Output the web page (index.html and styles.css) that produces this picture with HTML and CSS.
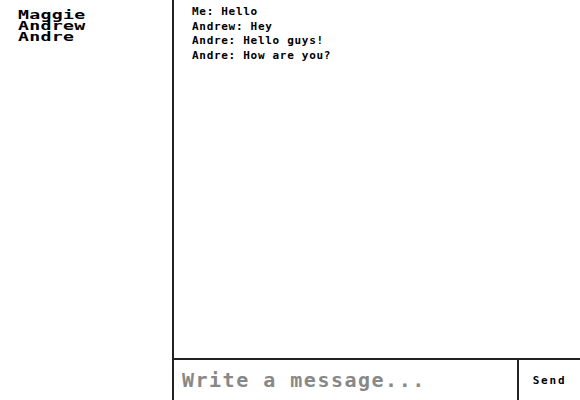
FILE: index.html
```html
<!DOCTYPE html>
<html>
<head>
<meta charset="utf-8">
<link rel="stylesheet" href="styles.css">
</head>
<body>
<div class="app">
  <aside class="users">
    <div class="user"><span class="name">Maggie</span></div>
    <div class="user"><span class="name">Andrew</span></div>
    <div class="user"><span class="name">Andre</span></div>
  </aside>
  <main class="chat">
    <div class="messages">
      <div class="msg">Me: Hello</div>
      <div class="msg">Andrew: Hey</div>
      <div class="msg">Andre: Hello guys!</div>
      <div class="msg">Andre: How are you?</div>
    </div>
    <form class="composer">
      <input class="input" type="text" placeholder="Write a message...">
      <button class="send" type="button">Send</button>
    </form>
  </main>
</div>
</body>
</html>
```
FILE: styles.css
```css
html, body {
  margin: 0;
  padding: 0;
  height: 100%;
  background: #fff;
}
.app {
  display: flex;
  height: 400px;
  width: 580px;
  font-family: "DejaVu Sans Mono", "Liberation Mono", monospace;
  color: #000;
}
.users {
  flex: none;
  width: 174px;
  border-right: 2px solid #222;
  padding: 8px 0 0 18px;
  box-sizing: border-box;
}
.user {
  height: 11px;
  line-height: 11px;
}
.name {
  display: inline-block;
  font-size: 13px;
  font-weight: bold;
  line-height: 11px;
  letter-spacing: 0.2px;
  transform: scaleX(1.4);
  transform-origin: left center;
}
.chat {
  flex: 1;
  display: flex;
  flex-direction: column;
  min-width: 0;
}
.messages {
  flex: 1;
  padding: 5px 0 0 18px;
}
.msg {
  font-size: 11px;
  font-weight: bold;
  line-height: 14.5px;
  letter-spacing: 0.7px;
}
.composer {
  display: flex;
  height: 42px;
  border-top: 2px solid #222;
  box-sizing: border-box;
  margin: 0;
}
.input {
  flex: none;
  width: 345px;
  border: none;
  border-right: 2px solid #222;
  box-sizing: border-box;
  padding: 0 0 0 8px;
  margin: 0;
  font-family: "DejaVu Sans Mono", "Liberation Mono", monospace;
  font-size: 20px;
  font-weight: bold;
  letter-spacing: 1.5px;
  outline: none;
  background: #fff;
}
.input::placeholder {
  color: #888;
}
.send {
  flex: 1;
  border: none;
  background: #fff;
  margin: 0;
  padding: 0;
  font-family: "DejaVu Sans Mono", "Liberation Mono", monospace;
  font-size: 11px;
  font-weight: bold;
  letter-spacing: 1.8px;
  color: #000;
}
```
